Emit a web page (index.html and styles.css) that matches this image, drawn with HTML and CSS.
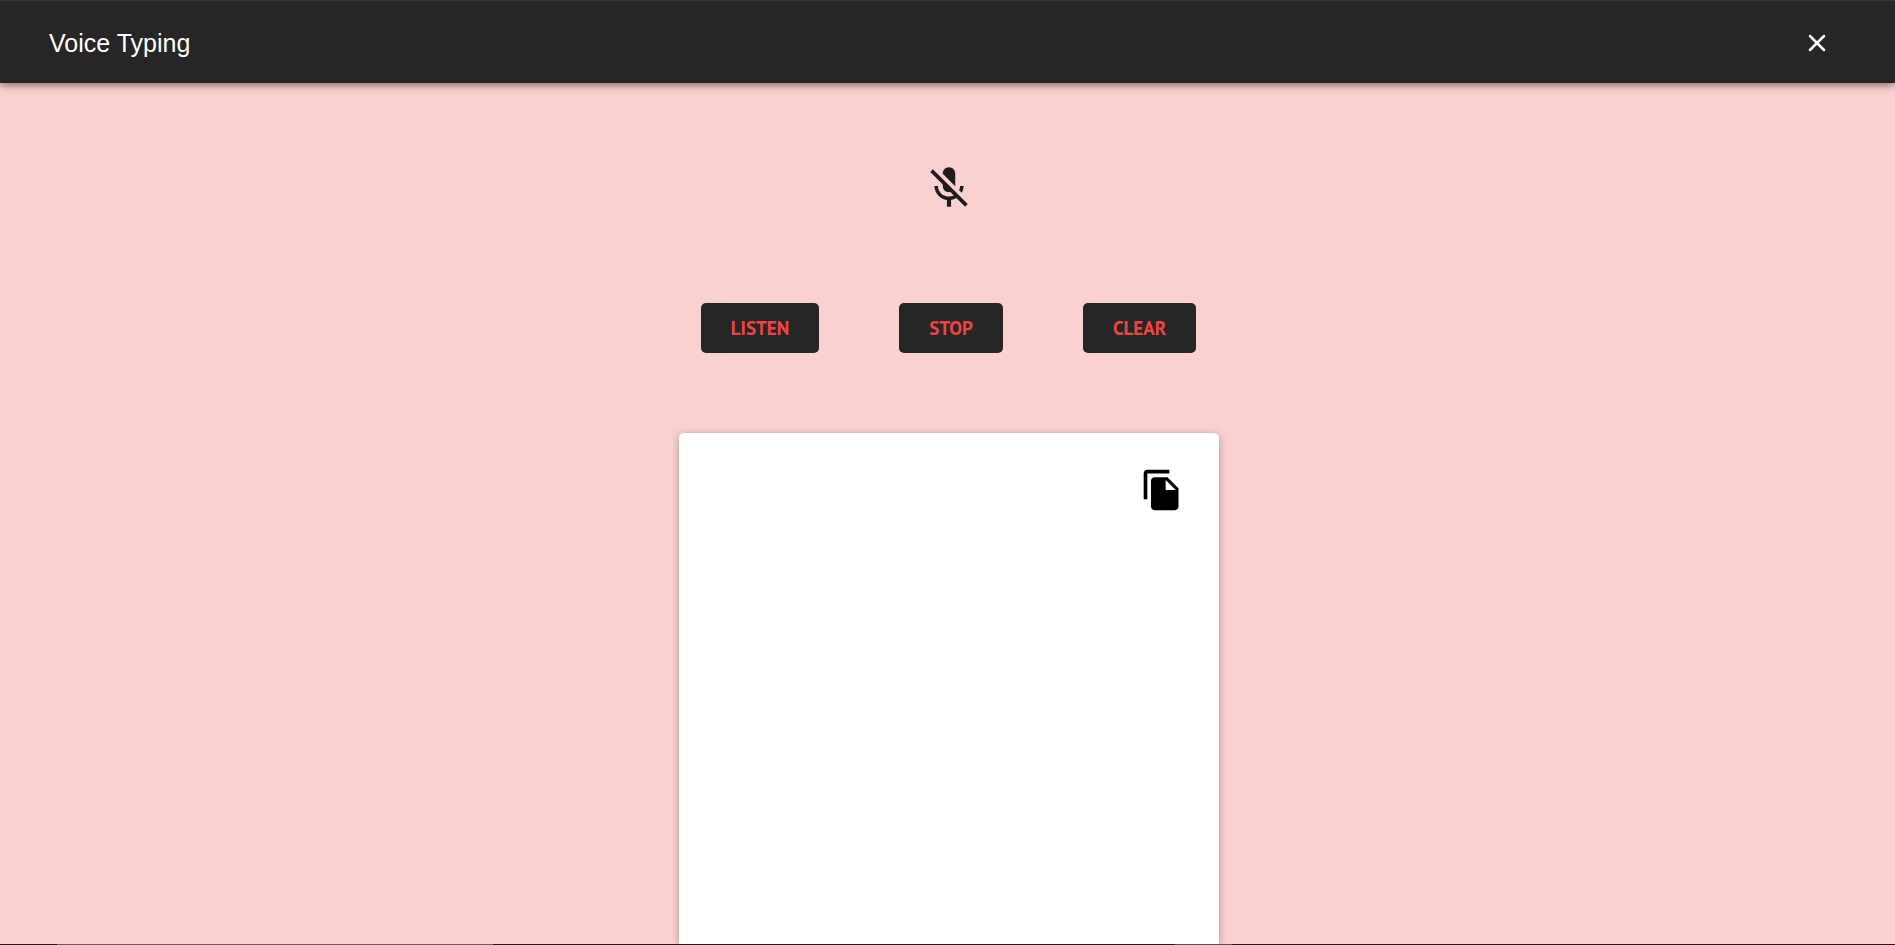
FILE: index.html
```html
<!DOCTYPE html>
<html lang="en">
<head>
<meta charset="utf-8">
<meta name="viewport" content="width=device-width, initial-scale=1">
<title>Voice Typing</title>
<link rel="stylesheet" href="styles.css">
</head>
<body>
<div class="dialog">
  <header class="bar">
    <h1 class="bar-title">Voice Typing</h1>
    <button class="icon-button close" type="button" aria-label="Close">
      <svg viewBox="0 0 18 18" width="18" height="18" aria-hidden="true"><path d="M2 2l14 14M16 2L2 16" fill="none" stroke="currentColor" stroke-width="2.5" stroke-linecap="round"/></svg>
    </button>
  </header>
  <main class="content">
    <svg class="mic" viewBox="0 0 24 24" role="img" aria-label="Microphone off"><path d="M19 11h-1.7c0 .74-.16 1.43-.43 2.05l1.23 1.23c.56-.98.9-2.09.9-3.28zm-4.02.17c0-.06.02-.11.02-.17V5c0-1.66-1.34-3-3-3S9 3.34 9 5v.18l5.98 5.99zM4.27 3L3 4.27l6.01 6.01V11c0 1.66 1.33 3 2.99 3 .22 0 .44-.03.65-.08l1.66 1.66c-.71.33-1.5.52-2.31.52-2.76 0-5.3-2.1-5.3-5.1H5c0 3.41 2.72 6.23 6 6.72V21h2v-3.28c.91-.13 1.77-.45 2.54-.9L19.73 21 21 19.73 4.27 3z"/></svg>
    <div class="actions">
      <button class="action" type="button">LISTEN</button>
      <button class="action" type="button">STOP</button>
      <button class="action" type="button">CLEAR</button>
    </div>
    <section class="card" aria-label="Transcript">
      <button class="icon-button copy" type="button" aria-label="Copy text">
        <svg viewBox="0 0 24 24" width="44" height="44" aria-hidden="true"><path fill="currentColor" d="M16 1H4c-1.1 0-2 .9-2 2v14h2V3h12V1zm-1 4l6 6v10c0 1.1-.9 2-2 2H7.99C6.89 23 6 22.1 6 21V7c0-1.1.89-2 1.99-2H15zm-1 7h5.5L14 6.5V12z"/></svg>
      </button>
    </section>
  </main>
  <div class="edge"></div>
</div>
</body>
</html>
```
FILE: styles.css
```css
* { box-sizing: border-box; }
body { margin: 0; background: #fbd0d0; font-family: Arial, "Liberation Sans", sans-serif; }
.dialog { display: flex; flex-direction: column; height: 100vh; overflow: hidden; }
.bar {
  display: flex; align-items: center; justify-content: space-between; flex: none;
  padding: 27px 69px 25px 49px;
  border-top: 1px solid #35363a;
  background: #262626; color: #fff;
  box-shadow: 0 2px 8px rgba(0, 0, 0, .5);
}
.bar-title { margin: 0; font-size: 25px; line-height: 30px; font-weight: 400; }
.icon-button { display: flex; padding: 0; border: 0; background: none; color: inherit; cursor: pointer; }
.content { display: flex; flex: 1; flex-direction: column; align-items: center; padding: 80px 0 0 2px; }
.mic { flex: none; width: 50px; height: 50px; fill: #211c1c; }
.actions { display: flex; flex: none; gap: 80px; margin: 90px 0 80px; }
.action {
  padding: 13px 30px; border: 0; border-radius: 5px;
  background: #262626; color: #ef4444;
  font: 700 19px/24px "PT Sans", "Noto Sans", sans-serif; cursor: pointer;
}
.card {
  display: flex; flex: 1; align-items: flex-start; justify-content: flex-end;
  width: 100%; max-width: 540px; padding: 35px;
  border-radius: 5px 5px 0 0; background: #fff;
  box-shadow: 0 2px 8px rgba(0, 0, 0, .3);
}
.copy { color: #000; }
/* Dark hairline along the window's lower edge, with two lighter runs. */
.edge {
  flex: none; height: 1px; z-index: 1;
  background: linear-gradient(to right,
    #241a1a 3%, #6b5b5b 3% 26%, #241a1a 26% 62%, #5a5252 62% 65%, #241a1a 65%);
}
```
